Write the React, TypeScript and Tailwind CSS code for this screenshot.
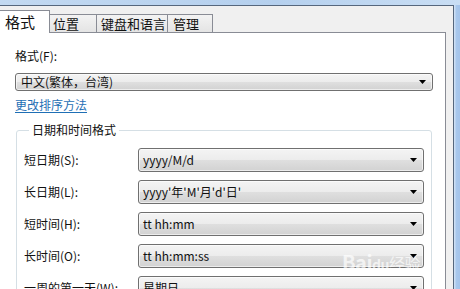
import React from "react";

const FONT = '"Noto Sans CJK SC", "Noto Sans", sans-serif';

function Arrow() {
  return (
    <svg width="7" height="4" viewBox="0 0 7 4" className="shrink-0">
      <path d="M0 0H7L3.5 4Z" fill="#000" />
    </svg>
  );
}

function Combo({ value, className }: { value: string; className: string }) {
  return (
    <div
      className={`h-[24px] flex items-center justify-between pl-[4px] pr-[6px] rounded-[3px] border border-[#707070] bg-[linear-gradient(#f4f4f4,#ececec_50%,#dfdfdf_51%,#d2d2d2)] shadow-[inset_0_0_0_1px_rgba(255,255,255,0.6)] text-[12px] leading-[16px] text-[#111] ${className}`}
    >
      <span className="whitespace-pre">{value}</span>
      <Arrow />
    </div>
  );
}

function Row({ label, value }: { label: string; value: string }) {
  return (
    <div className="flex items-center">
      <div className="w-[114px] text-[12px] leading-[16px] text-[#111] whitespace-nowrap">{label}</div>
      <Combo value={value} className="w-[286px]" />
    </div>
  );
}

export default function App() {
  return (
    <div
      className="relative w-[460px] h-[289px] overflow-hidden flex flex-col bg-[#b4cfee]"
      style={{ fontFamily: FONT }}
    >
      <div className="h-[5px] bg-[linear-gradient(90deg,#c2d9f1,#b5d0ee_60%,#c9def4)]" />
      <div className="flex-1 flex min-h-0">
        <div className="w-[454px] border-t border-r border-[#56677d] bg-[#f0f0f0] flex flex-col min-h-0">
          {/* tabs */}
          <div className="h-[26px] flex items-end shrink-0">
            <div className="relative z-10 h-[23px] mb-[-1px] w-[50px] bg-white border-t border-r border-[#898c95] pl-[5px] text-[15px] leading-[20px] pt-[1px] text-[#111]">
              格式
            </div>
            <div className="h-[18px] w-[47px] border-t border-r border-[#898c95] bg-[linear-gradient(#f3f3f3,#e4e4e4)] pl-[3px] text-[13px] leading-[17px] text-[#111]">
              位置
            </div>
            <div className="h-[18px] w-[71px] border-t border-r border-[#898c95] bg-[linear-gradient(#f3f3f3,#e4e4e4)] pl-[4px] text-[13px] leading-[17px] text-[#111] whitespace-nowrap">
              键盘和语言
            </div>
            <div className="h-[18px] w-[45px] border-t border-r border-[#898c95] bg-[linear-gradient(#f3f3f3,#e4e4e4)] pl-[5px] text-[13px] leading-[17px] text-[#111]">
              管理
            </div>
          </div>
          {/* panel */}
          <div className="flex-1 flex min-h-0">
            <div className="w-[446px] bg-white border-t border-r border-[#898c95] pt-[15px] flex flex-col min-h-0">
              <div className="pl-[15px] text-[12px] leading-[16px] text-[#111]">格式(F):</div>
              <Combo value="中文(繁体，台湾)" className="ml-[15px] mt-[9px] w-[418px] pl-[5px]" />
              <div className="ml-[15px] mt-[6px] text-[12px] leading-[16px] text-[#1f6fb5] underline underline-offset-2 w-fit">
                更改排序方法
              </div>
              <fieldset className="ml-[16px] mt-[9px] w-[416px] border border-[#d5dfe5] rounded-[3px] pl-[7px] pt-[10px] pb-[10px] flex flex-col gap-[8px]">
                <legend className="ml-[5px] px-[3px] text-[12px] leading-[16px] text-[#111]">日期和时间格式</legend>
                <Row label="短日期(S):" value="yyyy/M/d" />
                <Row label="长日期(L):" value="yyyy'年'M'月'd'日'" />
                <Row label="短时间(H):" value="tt hh:mm" />
                <Row label="长时间(O):" value="tt hh:mm:ss" />
                <Row label="一周的第一天(W):" value="星期日" />
              </fieldset>
            </div>
            <div className="flex-1" />
          </div>
        </div>
        <div className="flex-1 bg-[linear-gradient(90deg,#d6e5f6,#a9c8ec_40%,#a3c3ea)]" />
      </div>
      <div className="absolute left-[342px] top-[252px] text-[20px] leading-[20px] font-bold text-white/70 pointer-events-none select-none tracking-tight">
        Bai<span className="text-[14px]">du</span>
        <span className="text-[16px] font-normal">经验</span>
      </div>
    </div>
  );
}
